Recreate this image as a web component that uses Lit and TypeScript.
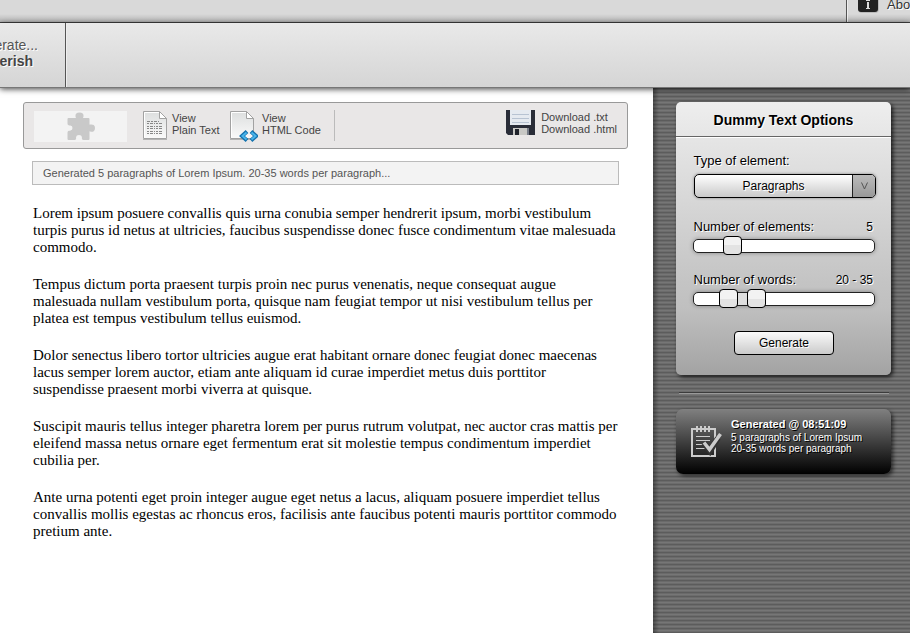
import { LitElement, html, css, svg } from "lit";
import { customElement } from "lit/decorators.js";

const paragraphs: string[][] = [
  [
    "Lorem ipsum posuere convallis quis urna conubia semper hendrerit ipsum, morbi vestibulum",
    "turpis purus id netus at ultricies, faucibus suspendisse donec fusce condimentum vitae malesuada",
    "commodo.",
  ],
  [
    "Tempus dictum porta praesent turpis proin nec purus venenatis, neque consequat augue",
    "malesuada nullam vestibulum porta, quisque nam feugiat tempor ut nisi vestibulum tellus per",
    "platea est tempus vestibulum tellus euismod.",
  ],
  [
    "Dolor senectus libero tortor ultricies augue erat habitant ornare donec feugiat donec maecenas",
    "lacus semper lorem auctor, etiam ante aliquam id curae imperdiet metus duis porttitor",
    "suspendisse praesent morbi viverra at quisque.",
  ],
  [
    "Suscipit mauris tellus integer pharetra lorem per purus rutrum volutpat, nec auctor cras mattis per",
    "eleifend massa netus ornare eget fermentum erat sit molestie tempus condimentum imperdiet",
    "cubilia per.",
  ],
  [
    "Ante urna potenti eget proin integer augue eget netus a lacus, aliquam posuere imperdiet tellus",
    "convallis mollis egestas ac rhoncus eros, facilisis ante faucibus potenti mauris porttitor commodo",
    "pretium ante.",
  ],
];

const page = svg`
  <path d="M1.500 1.500H17.500L24.500 8.500V28.500H1.500Z" fill="url(#paper)" stroke="#a2a2a2" />
  <path d="M2.500 27.500V2.500H17" fill="none" stroke="#fff" />
  <path d="M17.500 1.500V8.500H24.500Z" fill="#fff" stroke="#a2a2a2" />
  <path d="M1 29.500H25" stroke="#b4b4b4" />`;

const paper = svg`<defs><linearGradient id="paper" x2="0" y2="1">
  <stop stop-color="#dcdede" /><stop offset="1" stop-color="#fafafa" /></linearGradient></defs>`;

@customElement("app-root")
export class AppRoot extends LitElement {
  static styles = css`
    :host {
      display: flex;
      flex-direction: column;
      width: 910px;
      height: 633px;
      overflow: hidden;
      background: #fff;
      color: #000;
      font-family: "Liberation Sans", Arial, sans-serif;
      white-space: nowrap;
    }
    * { box-sizing: border-box; }
    svg { display: block; flex: none; }
    .top {
      flex: none;
      display: flex;
      justify-content: flex-end;
      height: 23px;
      background: linear-gradient(#d9d9d9 0, #d9d9d9 14px, #b8b8b8 22px);
      border-bottom: 1px solid #444;
    }
    .about {
      display: flex;
      width: 64px;
      padding-left: 11px;
      border-left: 1px solid #555;
      box-shadow: inset 1px 0 #eee;
      font-size: 13px;
      line-height: 15px;
      color: #333;
      text-shadow: 1px 1px #fff;
      overflow: hidden;
    }
    .about span { margin: -3px 0 0 7px; }
    .nav {
      flex: none;
      position: relative;
      z-index: 2;
      height: 65px;
      background: linear-gradient(#e9e9e9, #d5d5d5);
      border-bottom: 1px solid #777;
      box-shadow: 0 1px 6px rgba(0, 0, 0, 0.75);
    }
    .tab {
      display: flex;
      flex-direction: column;
      align-items: flex-end;
      width: 66px;
      height: 64px;
      padding: 14px 27px 0 0;
      border-right: 1px solid #555;
      box-shadow: 1px 0 #eee;
      font-size: 14px;
      line-height: 16px;
      color: #555;
      text-shadow: 1px 1px #fff;
    }
    .tab b { margin-right: 5px; color: #444; }
    .body { flex: 1; display: flex; min-height: 0; }
    .content { width: 653px; padding: 14px 25px 0 23px; }
    .tools {
      display: flex;
      align-items: flex-start;
      width: 605px;
      height: 47px;
      padding: 7px 10px 0 9px;
      background: #e9e7e7;
      border: 1px solid #999;
      border-radius: 3px;
      font-size: 11px;
      line-height: 12px;
      color: #444;
    }
    .plug {
      display: flex;
      justify-content: center;
      width: 93px;
      height: 31px;
      margin: 1px 15px 0 1px;
      background: #f3f3f3;
    }
    .label { width: 58px; margin: 2px 0 0 4px; }
    .label.wide { width: 73px; margin-left: 4px; }
    .second { margin-left: -1px; }
    .rule { width: 1px; height: 31px; margin-left: -1px; background: #bbb; }
    .save { display: flex; margin-left: auto; }
    .save .text { margin: 1px 0 0 6px; }
    .status {
      width: 587px;
      height: 24px;
      margin: 12px 0 20px 9px;
      padding-left: 10px;
      background: #f3f3f3;
      border: 1px solid #bbb;
      font-size: 11px;
      line-height: 22px;
      color: #555;
    }
    .para {
      margin: 0 0 20px 10px;
      font: 15px/17px "Liberation Serif", "Times New Roman", serif;
    }
    .line { display: block; }
    .side {
      flex: 1;
      padding: 14px 0 0 23px;
      background:
        linear-gradient(90deg, rgba(0, 0, 0, 0.35), transparent 6px),
        repeating-linear-gradient(#5c5c5c 0 1px, #6a6a6a 1px 2px, #767676 2px 3px, #6c6c6c 3px 4px);
    }
    .panel {
      width: 215px;
      height: 273px;
      background: linear-gradient(#eee 0, #c4c4c4 66%, #c0c0c0 75%, #a3a3a3);
      border-radius: 5px;
      box-shadow: 2px 2px 4px rgba(0, 0, 0, 0.75);
      font-size: 12px;
      text-shadow: 1px 1px #fff;
    }
    .title {
      height: 35px;
      border-bottom: 1px solid #666;
      box-shadow: 0 1px #fff;
      text-align: center;
      font-weight: bold;
      font-size: 14px;
      line-height: 36px;
    }
    .form { padding: 16px 16px 0 17px; }
    .row {
      display: flex;
      justify-content: space-between;
      padding: 0 2px 0 0.5px;
      line-height: 16px;
    }
    .name { font-size: 13px; }
    .select {
      display: flex;
      width: 182px;
      height: 24px;
      margin: 5px 0 21px 1px;
      border: 1px solid #000;
      border-radius: 5px;
      background: linear-gradient(#fff, #c9c9c9);
      box-shadow: 0 0 3px rgba(0, 0, 0, 0.4);
      overflow: hidden;
      line-height: 22px;
      text-align: center;
    }
    .value { flex: 1; }
    .arrow {
      width: 23px;
      border-left: 1px solid #222;
      background: linear-gradient(#bbb, #999);
    }
    .arrow svg { margin: 7px 0 0 8px; }
    .track {
      position: relative;
      height: 14px;
      margin: 4px 0 19px;
      border: 1px solid #222;
      border-radius: 5px;
      background: #fff;
      box-shadow: 0 0 4px rgba(0, 0, 0, 0.35);
    }
    .knob {
      position: absolute;
      top: -4px;
      width: 19px;
      height: 19px;
      border: 1px solid #000;
      border-radius: 4px;
      background: linear-gradient(#f2f2f2 50%, #e3e3e3 50%);
    }
    .range { position: absolute; top: 0; left: 40px; width: 20px; height: 12px; background: #ddd; }
    .button {
      width: 100px;
      height: 24px;
      margin: 25px auto 0 41px;
      border: 1px solid #000;
      border-radius: 4px;
      background: linear-gradient(#fafafa, #cbcbcb);
      text-align: center;
      line-height: 22px;
    }
    .divider { width: 210px; height: 2px; margin: 17px 0 15px 3px; background: #3c3c3c; border-bottom: 1px solid #999; }
    .note {
      display: flex;
      width: 215px;
      height: 65px;
      padding: 9px 0 0 15px;
      border-radius: 7px;
      background: linear-gradient(#808080, #000);
      box-shadow: 2px 2px 4px rgba(0, 0, 0, 0.65);
      color: #fff;
      font-size: 10px;
      line-height: 11px;
      text-shadow: 1px 1px #000;
    }
    .note svg { margin-top: 7px; }
    .note b { display: block; margin-bottom: 1px; font-size: 11px; line-height: 13px; }
    .note .text { margin-left: 8px; }
  `;

  render() {
    return html`
      <div class="top">
        <div class="about">
          <svg width="22" height="14" viewBox="0 0 22 14">
            <path d="M0 0V9Q0 13 4 13H17Q21 13 21 9V0Z" fill="#bbb" />
            <path d="M0 0V9Q0 12 3 12H17Q20 12 20 9V0Z" fill="#222" />
            <path d="M8 0H12V1H8ZM9 2H11V8H12V9H8V8H9Z" fill="#ddd" />
          </svg>
          <span>About</span>
        </div>
      </div>
      <div class="nav"><div class="tab"><span>Generate...</span><b>Gibberish</b></div></div>
      <div class="body">
        <div class="content">
          <div class="tools">
            <div class="plug">
              <svg width="29" height="31" viewBox="-.5 0 29 31">
                <path fill="#c9c9c9" stroke="#c9c9c9" stroke-width="2" stroke-linejoin="round" d="M2 8H9.500Q11 8 10 5.500Q9.500 2.500 13 2.500Q16.500 2.500 16 5.500Q15 8 16.500 8H22V14Q22 15.500 24 14.500Q27.500 14 27.500 17Q27.500 20.500 24 19.500Q22 18.500 22 20V28H17Q16 28 16.500 26Q16 23 12.500 23Q9 23 8.500 26Q9 28 8 28H2V21.500Q2 20.500 4 20.500Q7 20 7 17Q7 14 4 13.500Q2 13.500 2 12.500Z" />
              </svg>
            </div>
            <svg width="26" height="32" viewBox="0 0 26 32">
              ${paper}${page}
              <path d="M5 11.500H17" stroke="#888" stroke-dasharray="3 1 2 1" />
              <path d="M5 13.500H21M5 16.500H21M5 18.500H21M5 21.500H21M5 23.500H21" stroke="#888" stroke-dasharray="2 1 3 1 1 1" />
            </svg>
            <div class="label">View<br />Plain Text</div>
            <svg class="second" width="29" height="32" viewBox="0 0 29 32">
              ${paper}${page}
              <path d="M18 21.500L13 26L18 30.500M22 21.500L27 26L22 30.500" fill="none" stroke="#1572ad" stroke-width="4" />
              <path d="M17.500 22.500L13.500 26L17.500 29.500M22.500 22.500L26.500 26L22.500 29.500" fill="none" stroke="#48b4eb" stroke-width="2" />
            </svg>
            <div class="label wide">View<br />HTML Code</div>
            <div class="rule"></div>
            <div class="save">
              <svg width="30" height="26" viewBox="0 0 30 26">
                <path d="M1 0H30V25H3L1 23Z" fill="#292d38" />
                <path d="M5 0H26V15H5Z" fill="#e5eaf0" />
                <path d="M7 4.500H24M7 8.500H24M7 12.500H24" stroke="#b7c3d2" />
                <path d="M8 18H22V25H8Z" fill="#c8c8c5" />
                <path d="M10 19H14V25H10Z" fill="#20232b" />
                <path d="M22 18H24V25H22Z" fill="#777d88" />
              </svg>
              <div class="text">Download .txt<br />Download .html</div>
            </div>
          </div>
          <div class="status">Generated 5 paragraphs of Lorem Ipsum. 20-35 words per paragraph...</div>
          ${paragraphs.map((p) => html`<p class="para">${p.map((l) => html`<span class="line">${l}</span>`)}</p>`)}
        </div>
        <div class="side">
          <div class="panel">
            <div class="title">Dummy Text Options</div>
            <div class="form">
              <div class="row"><span class="name">Type of element:</span></div>
              <div class="select">
                <span class="value">Paragraphs</span>
                <span class="arrow"><svg width="8" height="8" viewBox="0 0 8 8"><path d="M.5 .5L3.500 7L6.500 .5" fill="none" stroke="#555" /></svg></span>
              </div>
              <div class="row"><span class="name">Number of elements:</span><span>5</span></div>
              <div class="track"><div class="knob" style="left:29px"></div></div>
              <div class="row"><span class="name">Number of words:</span><span>20 - 35</span></div>
              <div class="track">
                <div class="range"></div>
                <div class="knob" style="left:25px"></div>
                <div class="knob" style="left:53px"></div>
              </div>
              <div class="button">Generate</div>
            </div>
          </div>
          <div class="divider"></div>
          <div class="note">
            <svg width="32" height="34" viewBox="0 0 32 34">
              <path d="M1 4H24V31H1Z" fill="none" stroke="#ccc" stroke-width="2" />
              <path d="M6 1V7M10 1V7M14 1V7M18 1V7" stroke="#ccc" stroke-width="2" />
              <path d="M5 11.500H19M5 15.500H19M5 19.500H15M5 23.500H19" stroke="#ccc" />
              <path d="M13 18L19 26L27 13" fill="none" stroke="#333" stroke-width="6" />
              <path d="M13 17.500L18.500 24.500L29.500 9" fill="none" stroke="#ccc" stroke-width="3.500" />
            </svg>
            <div class="text"><b>Generated @ 08:51:09</b>5 paragraphs of Lorem Ipsum<br />20-35 words per paragraph</div>
          </div>
        </div>
      </div>
    `;
  }
}
